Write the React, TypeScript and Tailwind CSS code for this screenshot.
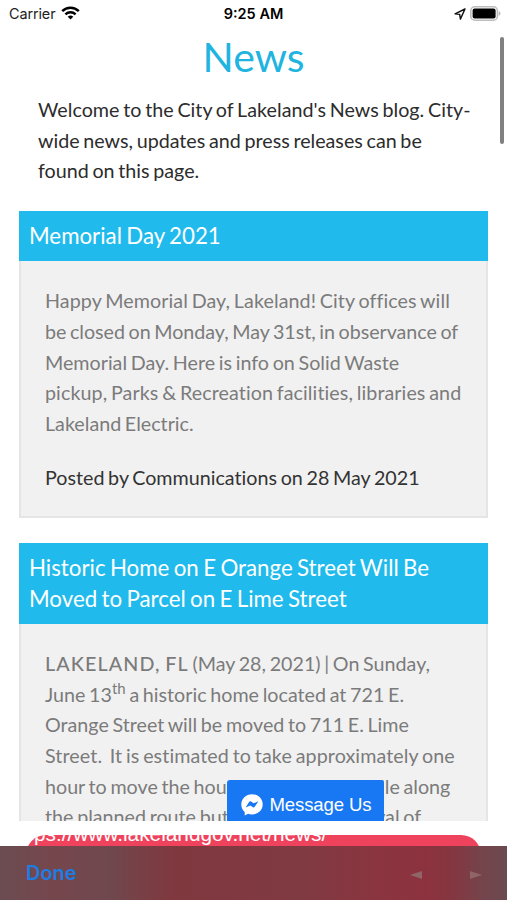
import type { ReactNode } from "react";

function StatusBar() {
  return (
    <header className="flex h-7 shrink-0 items-center pr-[6px] pl-[9px] font-['Inter',sans-serif] text-[14px] text-black">
      <div className="flex flex-1 items-center gap-[6px]">
        <span className="text-[14.4px] tracking-[-0.1px] text-[#222]">Carrier</span>
        <svg width="19" height="14" viewBox="0 0 19 14" className="-mt-[2px]" fill="none" stroke="#000">
          <path d="M1.2 5.2a11.8 11.8 0 0 1 16.6 0" strokeWidth="2.6" />
          <path d="M4.4 8.4a7.3 7.3 0 0 1 10.2 0" strokeWidth="2.4" />
          <path d="M9.5 13.6 6.7 10.8a4 4 0 0 1 5.6 0z" fill="#000" stroke="none" />
        </svg>
      </div>
      <span className="-ml-[3px] text-[14.5px] font-semibold">9:25 AM</span>
      <div className="flex flex-1 items-center justify-end gap-[4px]">
        <svg width="12" height="12" viewBox="0 0 12 12" fill="none" stroke="#111" strokeWidth="1.4" strokeLinejoin="round">
          <path d="M11 1 1 5.8l4.7.6.7 4.7z" />
        </svg>
        <svg width="31" height="15" viewBox="0 0 31 15" className="-mt-[2px]">
          <rect x="0.8" y="0.8" width="26.6" height="13.4" rx="4" fill="#fff" stroke="#bdbdbd" strokeWidth="1.6" />
          <rect x="2.6" y="2.6" width="23" height="9.8" rx="2" fill="#000" />
          <path d="M28.6 5v5c1.2-.4 1.9-1.3 1.9-2.5S29.800 5.400 28.600 5z" fill="#bdbdbd" />
        </svg>
      </div>
    </header>
  );
}

function NewsCard({ title, children }: { title: ReactNode; children: ReactNode }) {
  return (
    <article className="mb-[25px] bg-[#f1f1f1]">
      <h2 className="bg-[#20bbec] px-[10px] py-[10px] text-[22.3px] leading-[30.6px] text-white">{title}</h2>
      <div className="border-x-2 border-b-2 border-[#e5e5e5] px-6 pt-[25px] pb-[22px] text-[#7b7b7b]">{children}</div>
    </article>
  );
}

function MessageButton() {
  return (
    <button className="absolute top-[752px] left-[227px] flex h-[60px] w-[157px] items-start gap-[6px] rounded-t-[3px] bg-[#1877f2] pt-[13px] pl-[12.5px] font-['Liberation_Sans',sans-serif] text-[18.6px] leading-[23px] tracking-[-0.15px] whitespace-nowrap text-white [word-spacing:0]">
      <svg width="24" height="24" viewBox="0 0 24 24">
        <path
          d="M12 1.200C5.900 1.200 1.300 5.700 1.300 11.500c0 3 1.300 5.700 3.400 7.500v3.600l3.300-1.800c1.300.4 2.600.6 4 .6 6.100 0 10.700-4.300 10.700-9.900S18.100 1.200 12 1.200z"
          fill="#fff"
        />
        <path d="m5.600 14.400 3.500-5.300c.6-.8 1.500-1 2.300-.4l2.200 1.600 4.800-2-3.500 5.300c-.6.9-1.600 1.100-2.400.5l-2.200-1.600z" fill="#1877f2" />
      </svg>
      Message Us
    </button>
  );
}

function Toolbar() {
  return (
    <footer className="flex h-[54px] shrink-0 items-center justify-between bg-[linear-gradient(90deg,#6a4c51_0%,#75474d_10%,#6f484d_22%,#80383f_34%,#803a42_60%,#8a3540_74%,#8c323f_84%,#853640_89%,#75444b_95%,#6a4a50_100%)] pr-[25px] pl-[26px] font-['Inter',sans-serif]">
      <button className="text-[20px] font-semibold text-[#1d7ce2]">Done</button>
      <div className="flex gap-12 pt-1">
        <svg width="12" height="10" viewBox="0 0 12 10">
          <path d="M0 5 12 1v8z" fill="#8f6568" />
        </svg>
        <svg width="12" height="10" viewBox="0 0 12 10">
          <path d="M12 5 0 1v8z" fill="#8f6568" />
        </svg>
      </div>
    </footer>
  );
}

export default function App() {
  return (
    <div className="relative flex h-[900px] w-[507px] flex-col overflow-hidden bg-white font-['Lato',sans-serif]">
      <StatusBar />

      <main className="relative h-[793px] shrink-0 overflow-hidden px-[19px] text-[19.7px] leading-[30.6px] whitespace-nowrap [font-variant-ligatures:none] [word-spacing:-1.35px]">
        <h1 className="h-[67px] text-center text-[41px] leading-[58px] text-[#20b4e0]">News</h1>
        <p className="mb-[24px] px-[19px] text-[#2c2c2c]">
          <span className="tracking-[0.03px]">Welcome to the City of Lakeland's News blog. City-</span>
          <br />
          wide news, updates and press releases can be
          <br />
          found on this page.
        </p>

        <NewsCard title="Memorial Day 2021">
          <p className="mb-[24px]">
            <span className="tracking-[0.08px]">Happy Memorial Day, Lakeland! City offices will</span>
            <br />
            <span className="tracking-[-0.04px]">be closed on Monday, May 31st, in observance of</span>
            <br />
            Memorial Day. Here is info on Solid Waste
            <br />
            <span className="tracking-[0.08px]">pickup, Parks &amp; Recreation facilities, libraries and</span>
            <br />
            Lakeland Electric.
          </p>
          <p className="text-[#333]">Posted by Communications on 28 May 2021</p>
        </NewsCard>

        <NewsCard
          title={
            <>
              Historic Home on E Orange Street Will Be
              <br />
              Moved to Parcel on E Lime Street
            </>
          }
        >
          <p>
            <span className="font-medium tracking-[1.1px]">LAKELAND, FL</span> (May 28, 2021) | On Sunday,
            <br />
            June 13<sup className="text-[15px]">th</sup> a historic home located at 721 E.
            <br />
            Orange Street will be moved to 711 E. Lime
            <br />
            <span className="tracking-[0.09px]">Street.&nbsp; It is estimated to take approximately one</span>
            <br />
            hour to move the house less than one mile along
            <br />
            the planned route but prior to the removal of
          </p>
        </NewsCard>

        <div className="absolute top-[9px] right-[3px] h-[107px] w-1 rounded-full bg-[#808080]" />
        <MessageButton />
      </main>

      {/* address pill, cut off by the toolbar */}
      <div className="h-[25px] shrink-0 overflow-hidden px-[26px] pt-[14px]">
        <div className="h-10 overflow-hidden rounded-[20px] bg-[#ef435d] pl-2 font-['Liberation_Sans',sans-serif] text-[20.8px] leading-[22px] whitespace-nowrap text-white">
          <div className="-mt-[12px]">ps://www.lakelandgov.net/news/</div>
        </div>
      </div>

      <Toolbar />
    </div>
  );
}
